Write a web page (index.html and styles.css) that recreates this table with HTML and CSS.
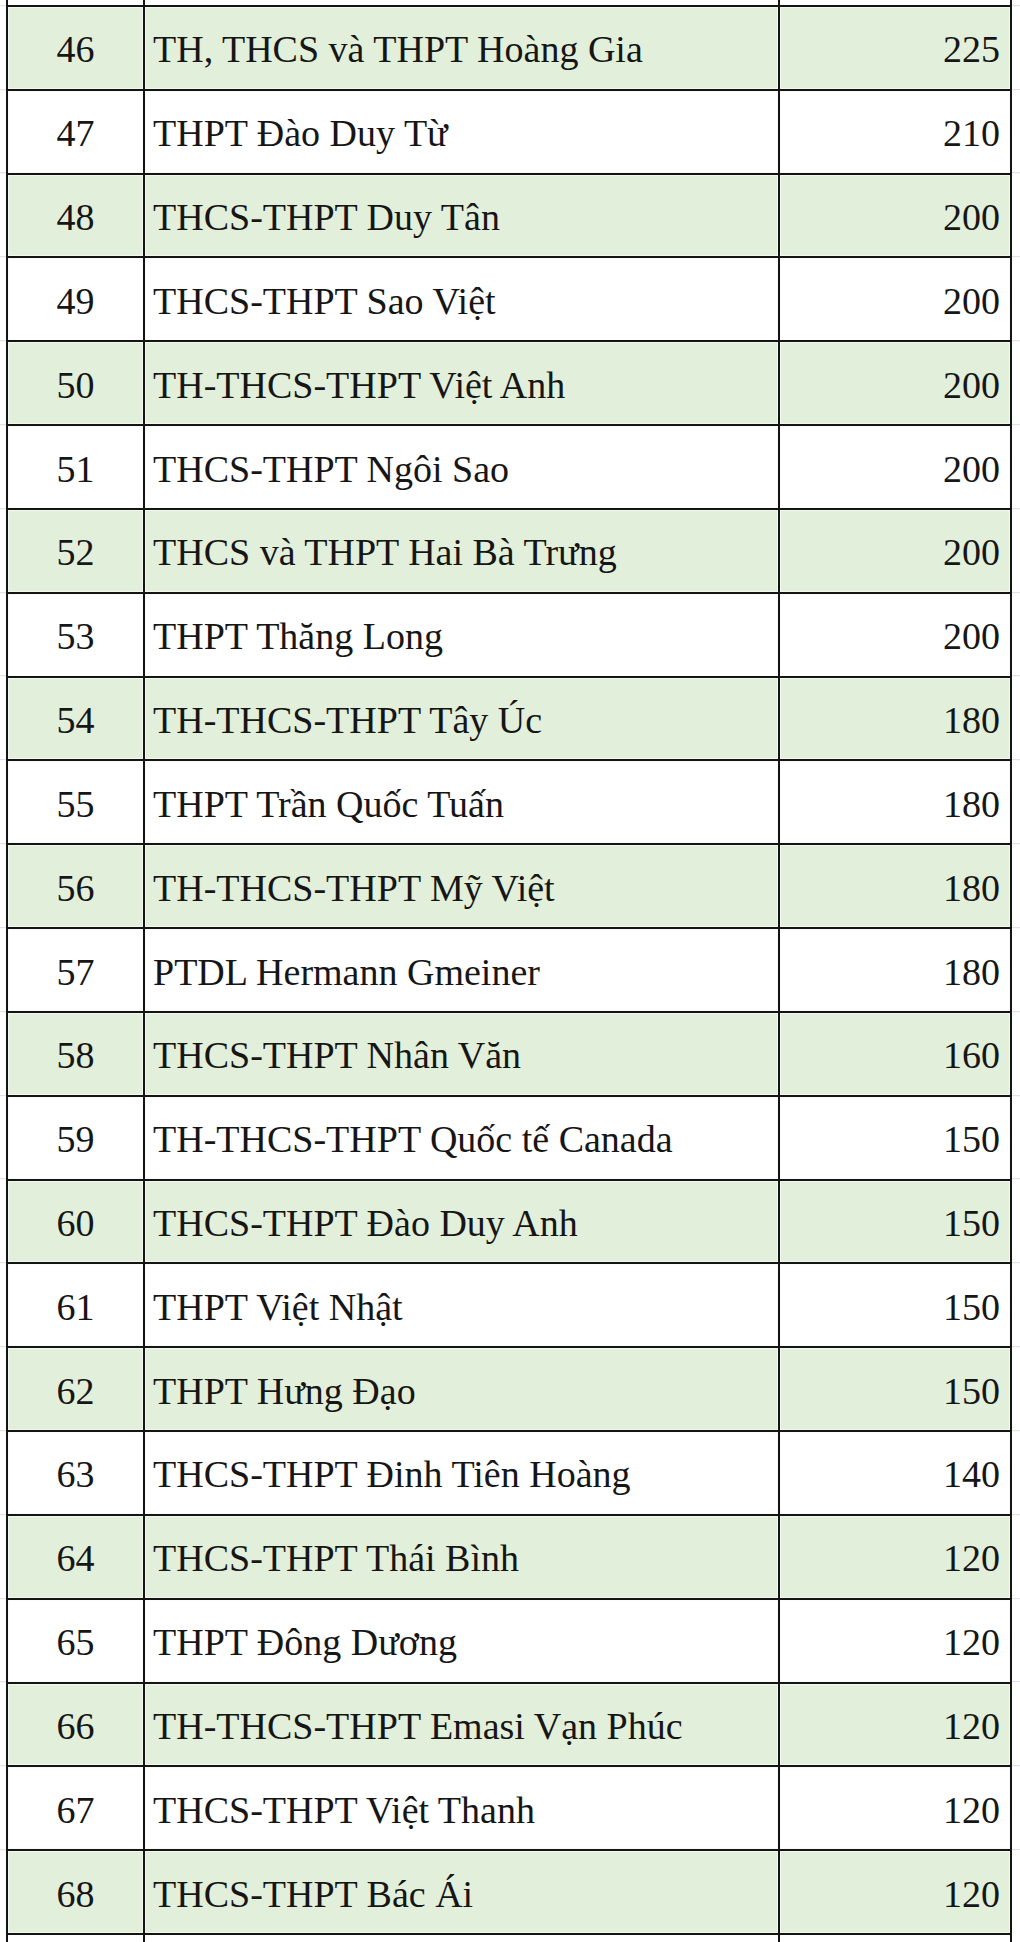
FILE: index.html
```html
<!DOCTYPE html>
<html lang="vi">
<head>
<meta charset="utf-8">
<title>Danh sách trường</title>
<link rel="stylesheet" href="styles.css">
</head>
<body>
<div class="sheet">
  <div class="gutter"></div>
  <div class="table" role="table">
    <div class="cell cut"></div><div class="cell cut"></div><div class="cell cut"></div>

    <div class="cell num g">46</div><div class="cell name g">TH, THCS và THPT Hoàng Gia</div><div class="cell val g">225</div>
    <div class="cell num">47</div><div class="cell name">THPT Đào Duy Từ</div><div class="cell val">210</div>
    <div class="cell num g">48</div><div class="cell name g">THCS-THPT Duy Tân</div><div class="cell val g">200</div>
    <div class="cell num">49</div><div class="cell name">THCS-THPT Sao Việt</div><div class="cell val">200</div>
    <div class="cell num g">50</div><div class="cell name g">TH-THCS-THPT Việt Anh</div><div class="cell val g">200</div>
    <div class="cell num">51</div><div class="cell name">THCS-THPT Ngôi Sao</div><div class="cell val">200</div>
    <div class="cell num g">52</div><div class="cell name g">THCS và THPT Hai Bà Trưng</div><div class="cell val g">200</div>
    <div class="cell num">53</div><div class="cell name">THPT Thăng Long</div><div class="cell val">200</div>
    <div class="cell num g">54</div><div class="cell name g">TH-THCS-THPT Tây Úc</div><div class="cell val g">180</div>
    <div class="cell num">55</div><div class="cell name">THPT Trần Quốc Tuấn</div><div class="cell val">180</div>
    <div class="cell num g">56</div><div class="cell name g">TH-THCS-THPT Mỹ Việt</div><div class="cell val g">180</div>
    <div class="cell num">57</div><div class="cell name">PTDL Hermann Gmeiner</div><div class="cell val">180</div>
    <div class="cell num g">58</div><div class="cell name g">THCS-THPT Nhân Văn</div><div class="cell val g">160</div>
    <div class="cell num">59</div><div class="cell name">TH-THCS-THPT Quốc tế Canada</div><div class="cell val">150</div>
    <div class="cell num g">60</div><div class="cell name g">THCS-THPT Đào Duy Anh</div><div class="cell val g">150</div>
    <div class="cell num">61</div><div class="cell name">THPT Việt Nhật</div><div class="cell val">150</div>
    <div class="cell num g">62</div><div class="cell name g">THPT Hưng Đạo</div><div class="cell val g">150</div>
    <div class="cell num">63</div><div class="cell name">THCS-THPT Đinh Tiên Hoàng</div><div class="cell val">140</div>
    <div class="cell num g">64</div><div class="cell name g">THCS-THPT Thái Bình</div><div class="cell val g">120</div>
    <div class="cell num">65</div><div class="cell name">THPT Đông Dương</div><div class="cell val">120</div>
    <div class="cell num g">66</div><div class="cell name g">TH-THCS-THPT Emasi Vạn Phúc</div><div class="cell val g">120</div>
    <div class="cell num">67</div><div class="cell name">THCS-THPT Việt Thanh</div><div class="cell val">120</div>
    <div class="cell num g">68</div><div class="cell name g">THCS-THPT Bác Ái</div><div class="cell val g">120</div>

    <div class="cell cut last"></div><div class="cell cut last"></div><div class="cell cut last"></div>
  </div>
  <div class="gutter right"></div>
</div>
</body>
</html>
```
FILE: styles.css
```css
html, body {
  margin: 0;
  padding: 0;
  background: #ffffff;
}

body {
  width: 1020px;
  height: 1942px;
  overflow: hidden;
}

.sheet {
  display: flex;
  height: 1942px;
}

.gutter {
  width: 6px;
  flex: none;
  background-image: repeating-linear-gradient(
    to bottom,
    transparent 0,
    transparent 82.83px,
    #dcdcdc 82.83px,
    #dcdcdc 83.83px
  );
  background-position: 0 -77.83px;
}

.gutter.right {
  flex: 1;
}

.table {
  display: grid;
  grid-template-columns: 137px 635px 232px;
  grid-template-rows: 7px repeat(23, 83.83px) 7px;
  border-left: 2px solid #141414;
  width: 1006px;
  box-sizing: border-box;
  flex: none;
}

.cell {
  box-sizing: border-box;
  border-right: 2px solid #141414;
  border-bottom: 2px solid #141414;
  background: #ffffff;
  display: flex;
  align-items: center;
  font-family: "Liberation Serif", "Times New Roman", serif;
  font-size: 38px;
  color: #161616;
  padding-top: 3px;
  white-space: nowrap;
  box-shadow: inset 0 0 0 1px #fafafa;
}

.cell.cut {
  padding: 0;
  box-shadow: none;
}

.cell.last {
  border-bottom: none;
}

.cell.g {
  background: #e2efda;
  box-shadow: inset 0 0 0 1px #f3f8ef;
}

.num {
  justify-content: center;
}

.name {
  padding-left: 8px;
}

.val {
  justify-content: flex-end;
  padding-right: 10px;
}
```
